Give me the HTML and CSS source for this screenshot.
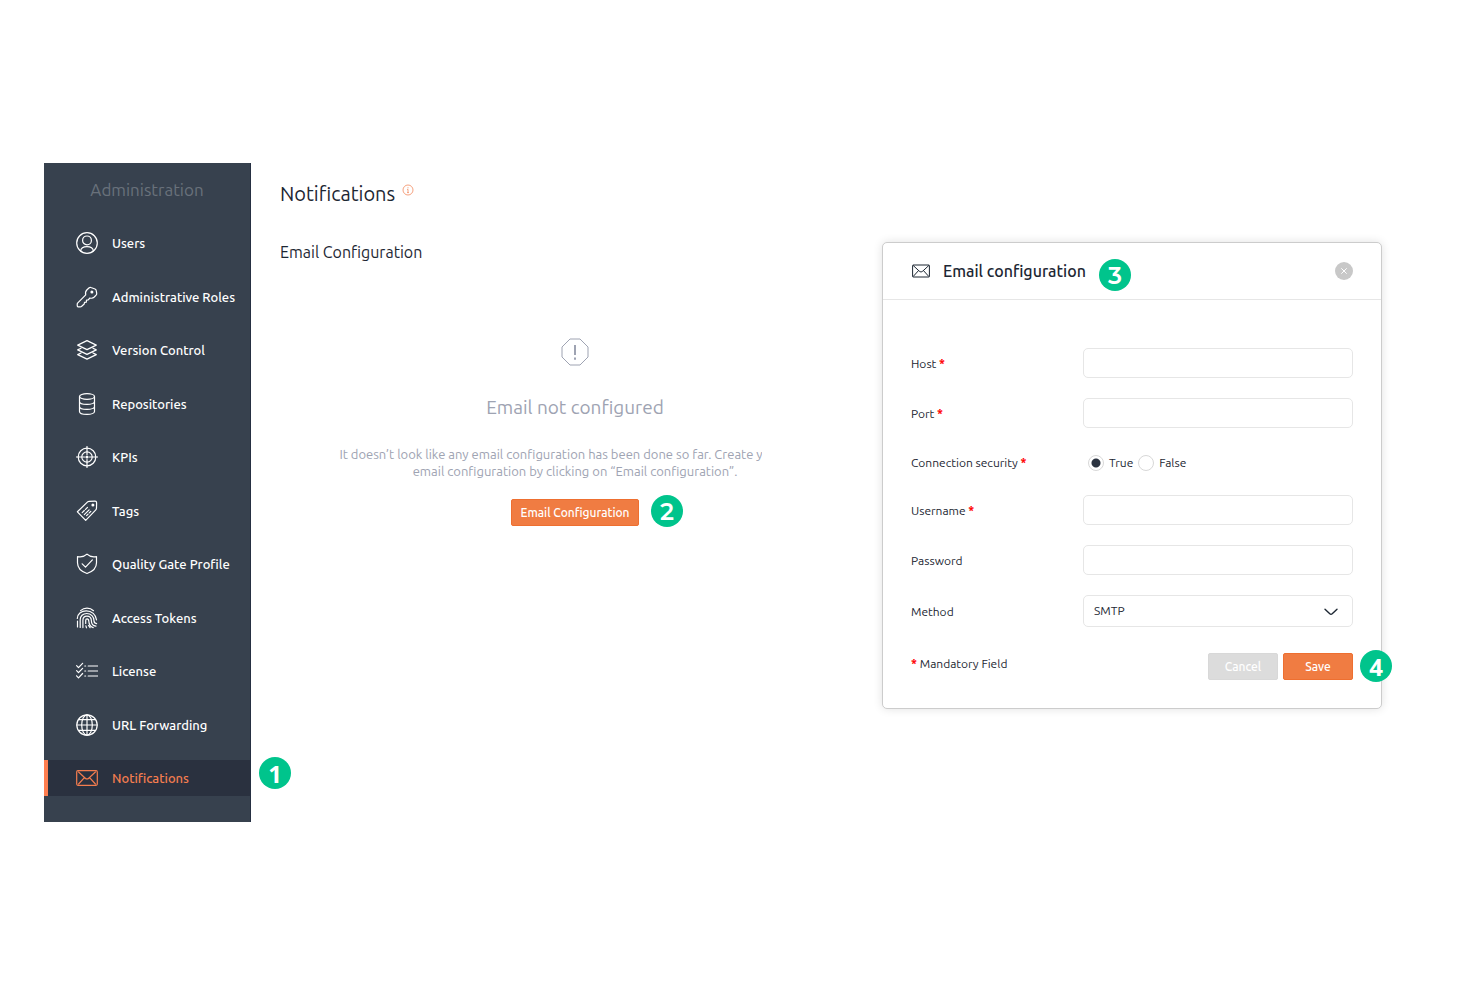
FILE: index.html
```html
<!DOCTYPE html>
<html lang="en">
<head>
<meta charset="utf-8">
<meta name="viewport" content="width=device-width, initial-scale=1">
<title>Administration - Notifications</title>
<link rel="stylesheet" href="styles.css">
</head>
<body>
<div class="layout">
  <aside class="sidebar">
    <h2 class="sidebar-title">Administration</h2>
    <nav class="nav">
      <a class="nav-item" href="#users"><svg class="icon" viewBox="0 0 22 22"><circle cx="11" cy="11" r="10.3"/><circle cx="11" cy="8.4" r="4.4"/><path d="M4.6 18.9c.4-3 2.6-4.2 6.4-4.2s6 1.200 6.400 4.200"/></svg>Users</a>
      <a class="nav-item" href="#roles"><svg class="icon" viewBox="0 0 22 22"><path d="M9.700 8.800c-.5-2 0-3.900 1.300-5.100l2.200-2c.5-.4 1.100-.5 1.700-.2l4.100 1.500c.7.300 1.100.7 1.200 1.400l.5 3c.1.700-.1 1.200-.6 1.700l-1.800 1.900c-1.200 1.200-2.800 1.500-4.400 1l-1.700 1.900-1.700.2-.2 2-1.800.2-.3 1.700-2.500 2.300c-.4.4-.9.500-1.500.5H2c-.5 0-.7-.2-.7-.7l-.1-1.800c0-.6.200-1 .6-1.400z"/><circle class="dot" cx="15.900" cy="5.900" r="1.500"/></svg>Administrative Roles</a>
      <a class="nav-item" href="#version"><svg class="icon" viewBox="0 0 22 22"><path d="M11 1.600l9.300 4.500-9.300 4.500-9.300-4.500zM5 9.300l-3.300 1.600 9.300 4.500 9.300-4.500L17 9.300M5 14l-3.300 1.600 9.300 4.500 9.300-4.500L17 14"/></svg>Version Control</a>
      <a class="nav-item" href="#repositories"><svg class="icon" viewBox="0 0 22 22"><ellipse cx="11" cy="3.500" rx="7.500" ry="2.800"/><path d="M3.500 3.500v15c0 1.600 3.300 2.900 7.500 2.900s7.500-1.300 7.500-2.900v-15M3.500 8.500c0 1.600 3.300 2.900 7.500 2.900s7.500-1.300 7.500-2.900M3.500 13.500c0 1.600 3.300 2.900 7.500 2.900s7.500-1.300 7.500-2.900"/></svg>Repositories</a>
      <a class="nav-item" href="#kpis"><svg class="icon" viewBox="0 0 22 22"><circle cx="11" cy="11" r="8.800"/><circle cx="11" cy="11" r="5.200"/><circle class="dot" cx="11" cy="11" r="1.600"/><path d="M11 .5v8M11 13.500v8M.5 11h8M13.500 11h8"/></svg>KPIs</a>
      <a class="nav-item" href="#tags"><svg class="icon" viewBox="0 0 22 22"><path d="M1.400 11.800L11.600 1.900c.4-.4.9-.6 1.500-.6l6-.1c1 0 1.500.5 1.500 1.500l-.1 5.400c0 .7-.2 1.200-.7 1.700L9.700 20.300z"/><circle class="dot" cx="16.900" cy="4.900" r="1.500"/><path d="M6.200 12.600l2.100-2.100M9.500 9.300l2-2M8.300 14.600l4.800-4.800M10.600 15.600l1.500-1.500M13.300 12.900l1.500-1.500"/></svg>Tags</a>
      <a class="nav-item" href="#quality"><svg class="icon" viewBox="0 0 22 22"><path d="M11 1.200C8.600 3.600 5 4.200 1.500 3.600v6.200c0 5 4 8.900 9.500 10.700 5.500-1.800 9.500-5.700 9.500-10.700V3.600C17 4.200 13.400 3.600 11 1.200zM6.200 10.800l3.300 3.400 6.900-7.300"/></svg>Quality Gate Profile</a>
      <a class="nav-item" href="#tokens"><svg class="icon" viewBox="0 0 22 22"><path d="M4.600 3.600C6.400 2 8.500 1.200 11 1.200c2.600 0 4.800.9 6.500 2.500M1.300 11.500C1.300 7 5.200 3.800 10.300 3.800c5.500 0 9.600 3.800 10.200 9M1.500 14v6M4.200 20.500v-7.700c0-3.700 2.700-6.300 6.500-6.300 4.400 0 7.300 3.100 7.300 7.300 0 1.800 1 2.700 2.600 2.800M6.900 20.600v-7.200c0-2.500 1.500-4.200 4-4.200 2.900 0 4.500 2.100 4.500 4.900 0 3.200 1.700 4.900 4.600 5M9.700 16.500v-3c0-1 .5-1.600 1.400-1.600 1.100 0 1.600.9 1.700 2.300.2 3.200 1.700 5.600 4.400 6.400M9.900 18.800l.6 2M12.500 18.500l1.600 2.200"/></svg>Access Tokens</a>
      <a class="nav-item" href="#license"><svg class="icon" viewBox="0 0 22 22"><path d="M.6 5.600l1.900 2 4.100-4.300M.6 10.700l1.900 2 4.100-4.300M.6 15.800l1.900 2 4.100-4.300M12.200 6h9.500M12.200 11h9.500M12.200 16h9.500M8.800 6h.8M8.800 11h.8M8.800 16h.8"/></svg>License</a>
      <a class="nav-item" href="#forwarding"><svg class="icon" viewBox="0 0 22 22"><circle cx="11" cy="11" r="10.200"/><ellipse cx="11" cy="11" rx="5.300" ry="10.200"/><path d="M11 .8v20.400M.8 11h20.400M2.600 5.600h16.800M2.600 16.400h16.800"/></svg>URL Forwarding</a>
      <a class="nav-item nav-item-active" href="#notifications" aria-current="page"><svg class="icon" viewBox="0 0 22 22"><rect x=".7" y="3.700" width="20.600" height="14.600" rx="1.200"/><path d="M2.600 5l6.700 6.200c1 .9 2.400.9 3.400 0L19.400 5M2.600 17l5.800-6.300M19.400 17l-5.800-6.300"/></svg>Notifications<span class="badge badge-plain badge-nav">1</span></a>
    </nav>
  </aside>

  <main class="content">
    <h1 class="page-title">Notifications <svg class="info" viewBox="0 0 12 12"><circle cx="6" cy="6" r="5"/><path d="M6 5.300v3.300M6 3.200v1.100M5 5.400h1M5 8.600h2"/></svg></h1>
    <h2 class="section-title">Email Configuration</h2>
    <section class="empty">
      <svg class="alert" viewBox="0 0 28 28"><path d="M9 1h10l8 8v10l-8 8H9l-8-8V9z"/><path class="mark" d="M14 7v10M14 19.500v2.200"/></svg>
      <h3 class="empty-title">Email not configured</h3>
      <p class="empty-text">It doesn’t look like any email configuration has been done so far. Create your own<br>email configuration by clicking on “Email configuration”.</p>
      <div class="empty-action">
        <button class="button button-wide" type="button">Email Configuration</button>
        <span class="badge badge-action">2</span>
      </div>
    </section>
  </main>

  <form class="dialog" aria-labelledby="dialog-title">
    <header class="dialog-header">
      <svg class="mail" viewBox="0 0 18 14"><rect x=".6" y="1" width="16.800" height="12" rx=".6"/><path d="M1 1.300l6.300 5.900c1 .9 2.400.9 3.400 0L17 1.300M1 12.700l5.600-6.200M17 12.700l-5.600-6.200"/></svg>
      <h2 class="dialog-title" id="dialog-title">Email configuration<span class="badge badge-title">3</span></h2>
      <button class="close" type="button" aria-label="Close"><svg viewBox="0 0 18 18"><path d="M6.300 6.300l5.400 5.400M11.700 6.300l-5.400 5.400"/></svg></button>
    </header>
    <div class="dialog-body">
      <div class="field"><label for="host">Host <span class="required">*</span></label><input class="control" id="host" type="text"></div>
      <div class="field"><label for="port">Port <span class="required">*</span></label><input class="control" id="port" type="text"></div>
      <div class="field field-radio" role="radiogroup" aria-labelledby="security">
        <span id="security">Connection security <span class="required">*</span></span>
        <div class="radios">
          <input class="radio" type="radio" name="security" id="secure-true" checked><label for="secure-true">True</label>
          <input class="radio" type="radio" name="security" id="secure-false"><label for="secure-false">False</label>
        </div>
      </div>
      <div class="field"><label for="username">Username <span class="required">*</span></label><input class="control" id="username" type="text"></div>
      <div class="field"><label for="password">Password</label><input class="control" id="password" type="password"></div>
      <div class="field"><label for="method">Method</label>
        <div class="select-wrap">
          <select class="control select" id="method"><option>SMTP</option></select>
          <svg class="chevron" viewBox="0 0 14 8"><path d="M1 1.200l4.800 4.500c.8.700 1.600.7 2.400 0L13 1.200"/></svg>
        </div>
      </div>
      <footer class="dialog-footer">
        <p class="note"><span class="required">*</span> Mandatory Field</p>
        <button class="button button-muted" type="button">Cancel</button>
        <button class="button" type="submit">Save</button>
        <span class="badge badge-plain badge-save">4</span>
      </footer>
    </div>
  </form>
</div>
</body>
</html>
```
FILE: styles.css
```css
* {
  box-sizing: border-box;
}

body {
  margin: 0;
  background: #fff;
  color: #1d2733;
  font-family: Ubuntu, "Noto Sans", sans-serif;
  font-size: 13px;
  line-height: 18px;
}

h1, h2, h3, p {
  margin: 0;
  font-weight: 400;
}

button, input, select {
  font: inherit;
  color: inherit;
}

svg {
  display: block;
  flex: none;
  fill: none;
  stroke: currentColor;
}

.layout {
  display: grid;
  grid-template-columns: 207px 1fr 500px;
  align-items: start;
  padding: 163px 100px 100px 44px;
}

/* Sidebar */
.sidebar {
  display: flex;
  flex-direction: column;
  min-height: 659px;
  padding-bottom: 26px;
  background: #37414e;
  border-right: 1px solid #263042;
}

.sidebar-title {
  padding: 15px 0 23px;
  color: #69717b;
  font-size: 17px;
  line-height: 24px;
  text-align: center;
}

.nav {
  display: flex;
  flex: 1;
  flex-direction: column;
  justify-content: space-between;
}

.nav-item {
  position: relative;
  display: flex;
  align-items: center;
  gap: 14px;
  height: 36px;
  padding-left: 28px;
  border-left: 4px solid transparent;
  color: #fff;
  font-weight: 500;
  text-decoration: none;
  white-space: nowrap;
}

.nav-item-active {
  background: #2a313f;
  border-left-color: #ff7e4f;
  color: #f47d4f;
}

.icon {
  width: 22px;
  height: 22px;
  stroke-width: 1.2;
  stroke-linecap: round;
  stroke-linejoin: round;
}

.dot {
  fill: currentColor;
  stroke: none;
}

/* Numbered callouts */
.badge {
  position: absolute;
  width: 32px;
  height: 32px;
  border-radius: 50%;
  background: #00c48c;
  color: #fff;
  font-family: Montserrat, Inter, sans-serif;
  font-size: 24px;
  font-weight: 600;
  line-height: 33px;
  text-align: center;
}

.badge-plain {
  font-family: "Noto Sans", sans-serif;
  font-weight: 700;
}

.badge-nav {
  top: -3px;
  right: -41px;
}

.badge-action {
  top: -4px;
  left: calc(100% + 12px);
}

.badge-title {
  top: 0;
  left: calc(100% + 13px);
}

.badge-save {
  top: -3px;
  right: -39px;
}

/* Main content */
.content {
  margin-right: 120px;
  padding: 16px 0 20px 29px;
  overflow: hidden;
}

.page-title {
  display: flex;
  gap: 7px;
  font-size: 20px;
  line-height: 30px;
}

.info {
  width: 12px;
  height: 12px;
  margin-top: 5px;
  color: #f6a27f;
}

.section-title {
  margin-top: 31px;
  font-size: 16px;
  line-height: 24px;
}

.empty {
  display: flex;
  flex-direction: column;
  align-items: center;
  width: 470px;
  margin: 74px 0 0 60px;
  color: #9ea3b2;
}

.alert {
  width: 28px;
  height: 28px;
}

.mark {
  stroke-width: 2;
}

.empty-title {
  margin-top: 26px;
  font-size: 19px;
  line-height: 30px;
}

.empty-text {
  margin-top: 24px;
  line-height: 17px;
  text-align: center;
  white-space: nowrap;
}

.empty-action {
  position: relative;
  margin-top: 19px;
}

.button {
  width: 70px;
  height: 27px;
  padding: 0;
  border: 1px solid #ee6f30;
  border-radius: 2px;
  background: #f07c42;
  color: #fff;
  font-size: 12px;
  font-weight: 500;
}

.button-wide {
  display: block;
  width: 128px;
}

.button-muted {
  border-color: #d8d8d8;
  background: #dcdcdc;
}

/* Dialog */
.dialog {
  margin-top: 79px;
  border: 1px solid #ccc;
  border-radius: 5px;
  background: #fff;
  box-shadow: 0 0 10px rgba(0, 0, 0, 0.12);
  font-size: 12px;
}

.dialog-header {
  display: flex;
  align-items: center;
  gap: 13px;
  height: 57px;
  padding: 0 28px 0 29px;
  border-bottom: 1px solid #e6e6e6;
}

.mail {
  width: 18px;
  height: 14px;
}

.dialog-title {
  position: relative;
  font-size: 16px;
  font-weight: 500;
  line-height: 24px;
}

.close {
  width: 18px;
  height: 18px;
  margin-left: auto;
  padding: 0;
  border: 0;
  border-radius: 50%;
  background: #c8c8c8;
  color: #fff;
}

.dialog-body {
  display: flex;
  flex-direction: column;
  gap: 20px;
  padding: 48px 28px 28px;
}

.field {
  display: grid;
  grid-template-columns: 1fr 270px;
  align-items: center;
}

.field > label {
  padding-top: 2px;
}

.field-radio {
  height: 27px;
  padding-top: 3px;
}

.required {
  color: #f00;
  font-weight: 700;
}

.control {
  display: block;
  width: 100%;
  height: 30px;
  padding: 0 10px;
  border: 1px solid #e6e6e6;
  border-radius: 5px;
  background: #fff;
}

.radios {
  display: flex;
  align-items: center;
  gap: 5px;
  padding-left: 5px;
}

.radio {
  appearance: none;
  width: 16px;
  height: 16px;
  margin: 0;
  border: 1px solid #d8d8d8;
  border-radius: 50%;
  background: #fff;
}

.radio:checked {
  background: radial-gradient(circle, #2b3340 4px, #fff 5px);
}

.select-wrap {
  position: relative;
}

.select {
  height: 32px;
  appearance: none;
}

.chevron {
  position: absolute;
  top: 13px;
  right: 15px;
  width: 14px;
  height: 8px;
  stroke-width: 1.4;
  stroke-linecap: round;
  pointer-events: none;
}

.dialog-footer {
  position: relative;
  display: flex;
  align-items: center;
  gap: 5px;
  margin-top: 6px;
}

.note {
  align-self: flex-start;
  margin: 2px auto 0 0;
}
```
